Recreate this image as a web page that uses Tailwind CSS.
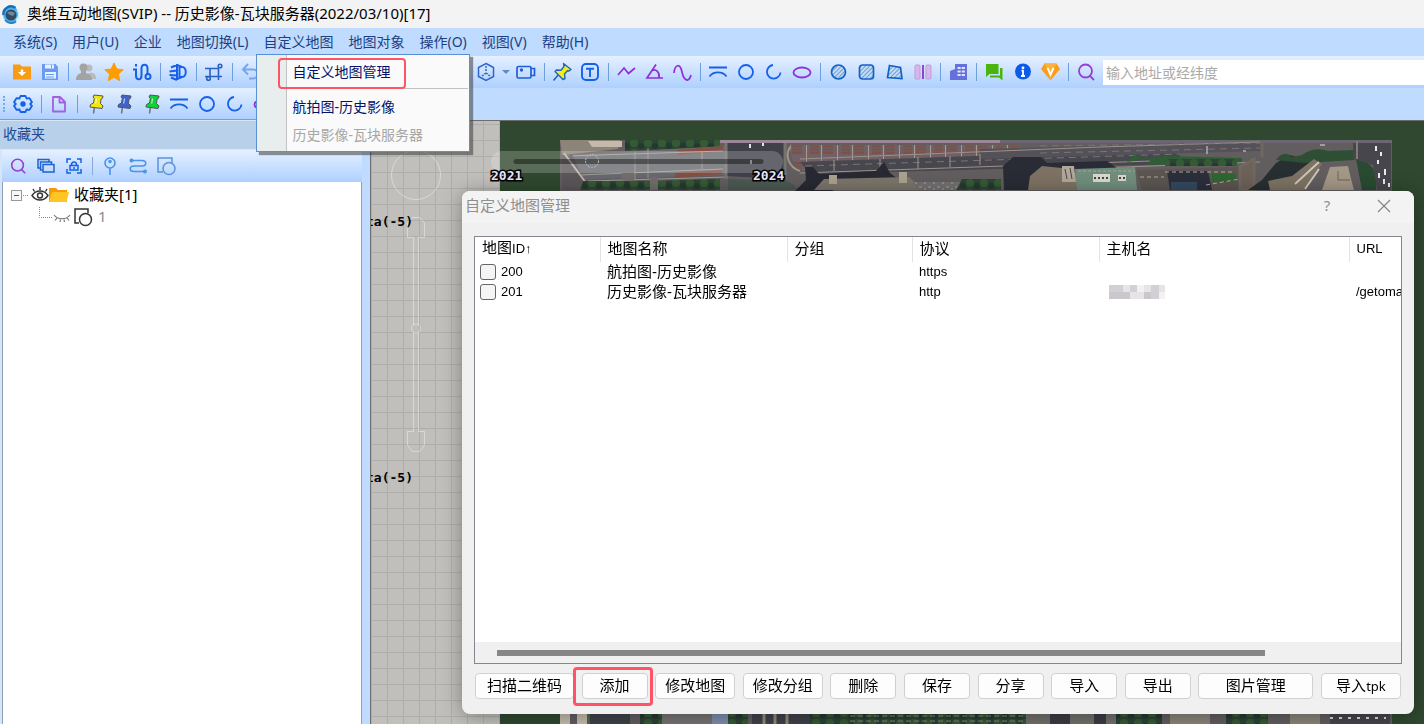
<!DOCTYPE html>
<html lang="zh-CN">
<head>
    <meta charset="UTF-8">
    <meta name="viewport" content="width=device-width, initial-scale=1.0">
    <title>奥维互动地图</title>
    <script src="https://cdn.jsdelivr.net/npm/@tailwindcss/browser@4"></script>
</head>
<body class="h-screen flex flex-col overflow-hidden bg-[#bfdbff] text-sm text-black font-['Noto_Sans','Noto_Sans_CJK_SC',sans-serif]">

    <!-- shared icons -->
    <svg class="absolute w-0 h-0">
        <symbol id="pin" viewBox="0 0 20 20">
            <path d="M7.500 13l-1 6.500" stroke="#777" stroke-width="1.600" fill="none"/>
            <path d="M7 1l9 1-.5 2.300-1.500.7-.5 4.500 2.500 2.500-1 2.500-12-1.500.5-2.500 3-1.500.8-4.500-1.300-1.500z" fill="currentColor" stroke="#555" stroke-width="1" stroke-linejoin="round"/>
            <path d="M9.500 4.500l-.8 5" stroke="#fff" stroke-opacity=".7" stroke-width="1.200"/>
        </symbol>
        <symbol id="arc" viewBox="0 0 20 20">
            <path d="M1 5.500h18M1.500 14.500c4-5.500 13-5.500 17 0" fill="none" stroke="#1560e8" stroke-width="1.800"/>
        </symbol>
        <symbol id="circle" viewBox="0 0 20 20">
            <circle cx="10" cy="10" r="7" fill="none" stroke="#1560e8" stroke-width="1.800"/>
        </symbol>
        <symbol id="open-circle" viewBox="0 0 20 20">
            <path d="M9 3a6.800 6.800 0 1 0 7.500 7.500" fill="none" stroke="#1560e8" stroke-width="1.800"/>
        </symbol>
        <symbol id="ellipse" viewBox="0 0 20 20">
            <ellipse cx="10" cy="10.500" rx="8.500" ry="5" fill="none" stroke="#8f2fd6" stroke-width="1.800"/>
        </symbol>
        <symbol id="search" viewBox="0 0 20 20">
            <circle cx="9.500" cy="9" r="6.500" fill="none" stroke="#9340d5" stroke-width="1.800"/>
            <path d="M14 14l4 4" stroke="#9340d5" stroke-width="1.800"/>
        </symbol>
        <pattern id="hatch" width="3" height="3" patternUnits="userSpaceOnUse" patternTransform="rotate(45)">
            <path d="M0 0h3v3H0z" fill="#c3dbf5"/>
            <path d="M.5 0v3" stroke="#6d9fd6" stroke-width="1"/>
        </pattern>
    </svg>

    <header class="h-7 shrink-0 flex items-center gap-[5px] pl-0.5 bg-[#f3f3f3] text-[15px]">
        <svg class="size-5" viewBox="0 0 20 20">
            <circle cx="9" cy="10.500" r="8" fill="#45b4ec"/>
            <path d="M1.500 11a7.500 7.500 0 0 1 12-7" fill="none" stroke="#176cb8" stroke-width="2.400"/>
            <path d="M3 16a8 8 0 0 0 11 1.500" fill="none" stroke="#2b82c9" stroke-width="2"/>
            <circle cx="9" cy="11" r="5.500" fill="#344a63"/>
            <path d="M5 9c3-3 6-1 8 0l-2 3-3-1z" fill="#71889c"/>
            <path d="M15 6c2 3 2 7-1 10" fill="none" stroke="#c9efff" stroke-width="1.200"/>
        </svg>
        <h1>奥维互动地图(SVIP) -- 历史影像-瓦块服务器(2022/03/10)[17]</h1>
    </header>

    <nav class="relative z-20 h-7 shrink-0 flex items-center gap-[15px] pl-[13px] text-[14px] leading-5 text-[#1c4183]">
        <button>系统(S)</button>
        <button>用户(U)</button>
        <button>企业</button>
        <button>地图切换(L)</button>
        <div class="relative">
            <button>自定义地图</button>
            <!-- open menu -->
            <div class="absolute top-[22px] -left-[7px] w-[214px] h-[98px] border border-[#5b8fd3] bg-[#fafafa] shadow-[3px_3px_1px_rgba(60,60,60,0.55)] text-[#00126b] flex">
                <div class="w-[30px] shrink-0 bg-[#e8eeee] border-r border-[#c2c2c2]"></div>
                <div class="grow flex flex-col">
                    <button class="relative h-[33px] pl-[5px] text-left">自定义地图管理
                        <span class="absolute -left-[9px] top-[3px] w-[128px] h-[31px] border-2 border-[#ff5468] rounded-sm"></span>
                    </button>
                    <div class="h-px mr-px bg-[#c2c2c2]"></div>
                    <button class="mt-1 h-7 pl-[5px] text-left">航拍图-历史影像</button>
                    <button class="h-7 pl-[5px] text-left text-[#a6a6a6]" disabled>历史影像-瓦块服务器</button>
                </div>
            </div>
        </div>
        <button>地图对象</button>
        <button>操作(O)</button>
        <button>视图(V)</button>
        <button>帮助(H)</button>
    </nav>

    <!-- main toolbar -->
    <div class="h-8 shrink-0 flex items-center pl-2 bg-linear-to-b from-[#e5f0ff] to-[#aed0ff]">
        <button class="w-7 grid place-items-center" aria-label="导入">
            <svg class="size-5" viewBox="0 0 20 20"><path d="M1 2.500h7l2 2h9v13H1z" fill="#fa9c11"/><path d="M10 7.500v3" stroke="#fff" stroke-width="2.400"/><path d="M6 10h8l-4 4z" fill="#fff"/></svg>
        </button>
        <button class="w-7 grid place-items-center" aria-label="保存">
            <svg class="size-5" viewBox="0 0 20 20"><path d="M2 2h13.500l2.500 3v13H2z" fill="#6b9bf0"/><path d="M5 2.500h9v4H5zM5 10h11v6.500H5z" fill="#e7f1ff"/><path d="M6 12.500h8M6 15h8M11.500 3v3" stroke="#6b9bf0"/></svg>
        </button>
        <span class="w-2 flex justify-center"><i class="w-px h-[18px] bg-[#6d9fde]"></i></span>
        <button class="w-7 grid place-items-center" aria-label="好友">
            <svg class="size-5" viewBox="0 0 20 20"><circle cx="13" cy="6" r="3.500" fill="#bbb"/><path d="M10 17c0-8 10-8 10-1v1z" fill="#bbb"/><circle cx="7.500" cy="5.500" r="4" fill="#a3a3a3"/><path d="M0 18c0-5 3-6 5-7V9h5v2c3 1 6 2 6 7z" fill="#a3a3a3"/></svg>
        </button>
        <button class="w-7 grid place-items-center" aria-label="收藏">
            <svg class="size-5" viewBox="0 0 20 20"><path d="M10 1l2.800 6 6.400.7-4.800 4.400 1.400 6.600L10 15.400l-5.800 3.300 1.400-6.600L.8 7.700 7.200 7z" fill="#ff9d00" stroke="#ff9d00" stroke-linejoin="round"/></svg>
        </button>
        <button class="w-7 grid place-items-center" aria-label="轨迹">
            <svg class="size-5" viewBox="0 0 20 20" fill="none" stroke="#1560e8" stroke-width="2"><path d="M1 7.500h3v6c0 5 5.500 5 5.500 0v-7c0-5 6-5 6 0v6"/><circle cx="16" cy="14.500" r="2.500"/><path d="M4 2v2.500"/></svg>
        </button>
        <span class="w-2 flex justify-center"><i class="w-px h-[18px] bg-[#6d9fde]"></i></span>
        <button class="w-7 grid place-items-center" aria-label="三维">
            <svg class="size-5" viewBox="0 0 20 20" fill="none" stroke="#1560e8" stroke-width="2"><path d="M3 5.500l6-2.500M1.500 9.500l7.500-1M1.500 13l7.500.5M9 18l-6-2.500M9 2v16"/><path d="M11.500 5H14c5 0 5 10 0 10h-2.500zM9 3l5 2M9 17l5-2"/></svg>
        </button>
        <span class="w-2 flex justify-center"><i class="w-px h-[18px] bg-[#6d9fde]"></i></span>
        <button class="w-7 grid place-items-center" aria-label="裁剪">
            <svg class="size-5" viewBox="0 0 20 20" fill="none" stroke="#2a61c4" stroke-width="1.600"><path d="M1 6.500h14M6 6.500v8M1 14.500h17M14.500 6.500V18"/><circle cx="16" cy="4" r="1.800"/><circle cx="4.500" cy="16.500" r="1.800"/></svg>
        </button>
        <span class="w-2 flex justify-center"><i class="w-px h-[18px] bg-[#6d9fde]"></i></span>
        <button class="w-7 grid place-items-center" aria-label="撤销">
            <svg class="size-5" viewBox="0 0 20 20" fill="none" stroke="#79a5ee" stroke-width="2"><path d="M8 2L3 7.500l5 5M3 7.500h10c6 0 6 9 0 9H9"/></svg>
        </button>
        <span class="w-52 shrink-0"></span>
        <button class="w-7 grid place-items-center" aria-label="立方体">
            <svg class="size-5" viewBox="0 0 20 20" fill="none" stroke="#2c66c9" stroke-width="1.500"><path d="M10 1.500l7.500 4v9l-7.500 4-7.500-4v-9z"/><path d="M10 4v6M10 11l-4 3M10 11l4 3" stroke-dasharray="2 1"/></svg>
        </button>
        <button class="w-3 grid place-items-center" aria-label="更多">
            <svg class="w-2 h-1" viewBox="0 0 8 4"><path d="M0 0h8L4 4z" fill="#5e8ac7"/></svg>
        </button>
        <button class="w-7 grid place-items-center" aria-label="摄像">
            <svg class="size-5" viewBox="0 0 20 20" fill="none" stroke="#1f5fd6" stroke-width="1.700"><rect x="1" y="4.500" width="14" height="11.500" rx="1.500"/><path d="M15 6.500h3.500v7H15"/><circle cx="5.500" cy="8" r=".8" fill="#1f5fd6"/></svg>
        </button>
        <span class="w-2 flex justify-center"><i class="w-px h-[18px] bg-[#6d9fde]"></i></span>
        <button class="w-7 grid place-items-center" aria-label="标签">
            <svg class="size-5" viewBox="0 0 20 20"><path d="M7 12l-5.500 6.500" stroke="#2464b8" stroke-width="1.600"/><path d="M11.500 1.500l7.500 6-2 1.500-1.500-.3-3 3.300.5 4.500-2 1L3 9.500 4.500 8l4.500.2L12 4.500z" fill="#f7ee10" stroke="#2464b8" stroke-width="1.400" stroke-linejoin="round"/></svg>
        </button>
        <button class="w-7 grid place-items-center" aria-label="文字">
            <svg class="size-5" viewBox="0 0 20 20" fill="none" stroke="#1560e8" stroke-width="1.900"><rect x="2" y="2" width="16" height="16" rx="4"/><path d="M6 6.800h8M10 6.800V15"/></svg>
        </button>
        <span class="w-2 flex justify-center"><i class="w-px h-[18px] bg-[#6d9fde]"></i></span>
        <button class="w-7 grid place-items-center" aria-label="折线">
            <svg class="size-5" viewBox="0 0 20 20" fill="none" stroke="#8f2fd6" stroke-width="1.700"><path d="M2 13l6-7 4.500 5.500L19 6"/></svg>
        </button>
        <button class="w-7 grid place-items-center" aria-label="角度">
            <svg class="size-5" viewBox="0 0 20 20" fill="none" stroke="#8f2fd6" stroke-width="1.700"><path d="M12 2.500L3 16h16M8 8.500c4-2 8 2 7 7"/></svg>
        </button>
        <button class="w-7 grid place-items-center" aria-label="曲线">
            <svg class="size-5" viewBox="0 0 20 20" fill="none" stroke="#8f2fd6" stroke-width="1.700"><path d="M2 11c1-9 6-10 8-1s7 11 9 3"/></svg>
        </button>
        <span class="w-2 flex justify-center"><i class="w-px h-[18px] bg-[#6d9fde]"></i></span>
        <button class="w-7 grid place-items-center" aria-label="弧"><svg class="size-5"><use href="#arc"/></svg></button>
        <button class="w-7 grid place-items-center" aria-label="圆"><svg class="size-5"><use href="#circle"/></svg></button>
        <button class="w-7 grid place-items-center" aria-label="圆弧"><svg class="size-5"><use href="#open-circle"/></svg></button>
        <button class="w-7 grid place-items-center" aria-label="椭圆"><svg class="size-5"><use href="#ellipse"/></svg></button>
        <span class="w-2 flex justify-center"><i class="w-px h-[18px] bg-[#6d9fde]"></i></span>
        <button class="w-7 grid place-items-center" aria-label="填充圆">
            <svg class="size-5" viewBox="0 0 20 20"><circle cx="10.500" cy="10" r="7" fill="url(#hatch)" stroke="#1560c8" stroke-width="1.700"/></svg>
        </button>
        <button class="w-7 grid place-items-center" aria-label="填充矩形">
            <svg class="size-5" viewBox="0 0 20 20"><rect x="3.500" y="3" width="14" height="14" rx="3" fill="url(#hatch)" stroke="#1560c8" stroke-width="1.700"/></svg>
        </button>
        <button class="w-7 grid place-items-center" aria-label="多边形">
            <svg class="size-5" viewBox="0 0 20 20"><path d="M5.500 3.500l11 2 1.500 11L3.500 15.500z" fill="url(#hatch)" stroke="#1560c8" stroke-width="1.700"/></svg>
        </button>
        <button class="w-7 grid place-items-center" aria-label="缓冲区">
            <svg class="size-5" viewBox="0 0 20 20"><rect x="3" y="3" width="5" height="14" rx="1" fill="#dcb2f3" stroke="#b7a3c9"/><rect x="14" y="3" width="5" height="14" rx="1" fill="#dcb2f3" stroke="#b7a3c9"/><path d="M11 3v14" stroke="#8a35c9" stroke-width="1.800"/></svg>
        </button>
        <span class="w-2 flex justify-center"><i class="w-px h-[18px] bg-[#6d9fde]"></i></span>
        <button class="w-7 grid place-items-center" aria-label="企业">
            <svg class="size-5" viewBox="0 0 20 20"><path d="M2 9l5-2v11H2zM7 2h12v16H7z" fill="#6670dc"/><path d="M9.500 6h8M9.500 9.500h8M9.500 13h8" stroke="#dce6ff" stroke-width="2" stroke-dasharray="3.200 1"/></svg>
        </button>
        <span class="w-2 flex justify-center"><i class="w-px h-[18px] bg-[#6d9fde]"></i></span>
        <button class="w-7 grid place-items-center" aria-label="消息">
            <svg class="size-5" viewBox="0 0 20 20" fill="#48b40c"><path d="M2 2h12.500v10H5.500L2 15z"/><path d="M16 6h2.500v12.500L15 15.500H6v-2h10z"/></svg>
        </button>
        <button class="w-7 grid place-items-center" aria-label="信息">
            <svg class="size-5" viewBox="0 0 20 20"><circle cx="11" cy="9.500" r="8" fill="#0c5be6"/><circle cx="11" cy="5.800" r="1.400" fill="#fff"/><path d="M9.500 8.700h1.500v5M9 14h4" fill="none" stroke="#fff" stroke-width="1.800"/></svg>
        </button>
        <button class="w-7 grid place-items-center" aria-label="会员">
            <svg class="size-5" viewBox="0 0 20 20"><path d="M4.500 1.500h12L20 7l-9.500 11.500L1 7z" fill="#fb9d18"/><path d="M4.500 1.500L7 7l3.500 11.500L14 7l2.500-5.500z" fill="#f7b33d"/><path d="M7.500 6l3 6.500 3-6.500" fill="none" stroke="#fff" stroke-width="1.800"/></svg>
        </button>
        <span class="w-2 flex justify-center"><i class="w-px h-[18px] bg-[#6d9fde]"></i></span>
        <label for="addr" class="w-7 grid place-items-center" aria-label="搜索"><svg class="size-5"><use href="#search"/></svg></label>
        <input id="addr" type="text" placeholder="输入地址或经纬度" class="grow min-w-0 h-[25px] ml-[3px] pl-[3px] bg-white text-[14px] placeholder:text-[#a9a9a9] outline-none">
    </div>

    <!-- second toolbar -->
    <div class="h-8 w-[400px] shrink-0 flex items-center pl-[3px] border-b border-[#6f9fdc] bg-linear-to-b from-[#e5f0ff] to-[#aed0ff]">
        <span class="w-1.5 h-4 border-l-2 border-dotted border-[#7ba7e2]"></span>
        <button class="w-7 grid place-items-center" aria-label="设置">
            <svg class="size-5" viewBox="0 0 20 20" fill="none" stroke="#1560e8" stroke-width="1.800"><path d="M7.500 2h5l1 2.500 3-.3 2.500 4L17.200 10l1.800 1.800-2.500 4-3-.3-1 2.500h-5l-1-2.500-3 .3-2.500-4L2.800 10 1 8.200l2.500-4 3 .3z" stroke-linejoin="round"/><circle cx="10" cy="10" r="1.800" fill="#1560e8"/></svg>
        </button>
        <span class="w-2 flex justify-center"><i class="w-px h-[18px] bg-[#6d9fde]"></i></span>
        <button class="w-7 grid place-items-center" aria-label="新建">
            <svg class="size-5" viewBox="0 0 20 20" fill="none" stroke="#a25fe0" stroke-width="1.800" stroke-linejoin="round"><path d="M4 3h7l5 5v9.500H4zM10.500 3.500V8.500h5"/></svg>
        </button>
        <span class="w-2 flex justify-center"><i class="w-px h-[18px] bg-[#6d9fde]"></i></span>
        <button class="w-7 pl-1 grid place-items-center text-[#f2e711]" aria-label="黄色图钉"><svg class="size-5"><use href="#pin"/></svg></button>
        <button class="w-7 pl-1 grid place-items-center text-[#3f62cf]" aria-label="蓝色图钉"><svg class="size-5"><use href="#pin"/></svg></button>
        <button class="w-7 pl-1 grid place-items-center text-[#0ed336]" aria-label="绿色图钉"><svg class="size-5"><use href="#pin"/></svg></button>
        <button class="w-7 grid place-items-center" aria-label="弧"><svg class="size-5"><use href="#arc"/></svg></button>
        <button class="w-7 grid place-items-center" aria-label="圆"><svg class="size-5"><use href="#circle"/></svg></button>
        <button class="w-7 grid place-items-center" aria-label="圆弧"><svg class="size-5"><use href="#open-circle"/></svg></button>
        <button class="w-7 grid place-items-center" aria-label="椭圆"><svg class="size-5"><use href="#ellipse"/></svg></button>
    </div>

    <div class="grow min-h-0 flex">
        <!-- favourites panel -->
        <aside class="w-[362px] mr-2 shrink-0 flex flex-col pl-0.5 bg-[#d6e6f7]">
            <h2 class="h-[30px] -ml-0.5 pl-[3px] pb-0.5 flex items-center bg-[#b9d0eb] border-y border-[#d6e6f7] text-[14px] text-[#1c4a93]">收藏夹</h2>
            <div class="h-8 shrink-0 flex items-center pl-0.5 bg-linear-to-b from-[#e5f0ff] to-[#aed0ff]">
                <button class="w-7 grid place-items-center" aria-label="搜索"><svg class="size-[18px]"><use href="#search"/></svg></button>
                <button class="w-7 grid place-items-center" aria-label="图层">
                    <svg class="size-5" viewBox="0 0 20 20" fill="none" stroke="#1f62d0" stroke-width="1.500"><path d="M4.500 12H2V3.500h11V6"/><rect x="7" y="8.500" width="11" height="7.500"/><path d="M6.500 14H4.500V6h11v2"/></svg>
                </button>
                <button class="w-7 grid place-items-center" aria-label="锁定">
                    <svg class="size-5" viewBox="0 0 20 20" fill="none" stroke="#1560e8" stroke-width="1.500"><path d="M3 7V3h4M13 3h4v4M17 13v4h-4M7 17H3v-4"/><rect x="6" y="9.500" width="8" height="4.500"/><path d="M7.500 9c0-4 5-4 5 0M10 11v2"/></svg>
                </button>
                <span class="w-2 flex justify-center"><i class="w-px h-[18px] bg-[#8ba9d4]"></i></span>
                <button class="w-7 grid place-items-center" aria-label="定位">
                    <svg class="size-5" viewBox="0 0 20 20" fill="none" stroke="#4993e8" stroke-width="1.600"><circle cx="10" cy="7" r="5"/><circle cx="10" cy="5.500" r="1"/><path d="M10 12v7"/></svg>
                </button>
                <button class="w-7 grid place-items-center" aria-label="路线">
                    <svg class="size-5" viewBox="0 0 20 20" fill="none" stroke="#4993e8" stroke-width="1.600"><path d="M3 4.500h11c5 0 5 5.500 0 5.500H6c-5 0-5 5.500 0 5.500h11"/><circle cx="3.500" cy="4.500" r="1.200"/><circle cx="17" cy="15.500" r="1.200"/></svg>
                </button>
                <button class="w-7 grid place-items-center" aria-label="形状">
                    <svg class="size-5" viewBox="0 0 20 20" fill="none" stroke="#5b93d8" stroke-width="1.500"><path d="M7 16H2V2h14v5"/><circle cx="13" cy="12.500" r="6"/></svg>
                </button>
            </div>
            <ul class="grow bg-white border-l border-r border-[#8ca0b8] text-[15px] pl-2 pt-px">
                <li>
                    <div class="h-6 flex items-center">
                        <svg class="w-5 h-6" viewBox="0 0 20 24"><rect x=".5" y="7.500" width="10" height="10" fill="#f7f7f7" stroke="#999"/><path d="M3 12.500h5" stroke="#3a5cab"/><path d="M12 12.500h6" stroke="#888" stroke-dasharray="1 1"/></svg>
                        <svg class="w-[18px] h-5" viewBox="0 0 18 20" fill="none" stroke="#333" stroke-width="1.400"><path d="M1 10.500c4-6 12-6 16 0-4 6-12 6-16 0zM3.500 6.500L2 4M9 5V2M14.500 6.500L16 4"/><circle cx="9" cy="10.500" r="2.500"/></svg>
                        <svg class="w-5 h-4" viewBox="0 0 20 16"><path d="M0 1h7l2 2h9v12H0z" fill="#f59a0b"/><path d="M3 5h17l-2.500 10H0z" fill="#ffc425"/></svg>
                        <span class="pl-[5px]">收藏夹[1]</span>
                    </div>
                    <ul>
                        <li class="h-5 flex items-center pl-7 text-[#8a8a8a]">
                            <svg class="w-[14px] h-5" viewBox="0 0 14 20" fill="none" stroke="#888" stroke-dasharray="1 1"><path d="M.5 0v10.500H14"/></svg>
                            <svg class="w-[18px] h-4" viewBox="0 0 18 16" fill="none" stroke="#777" stroke-width="1.200"><path d="M1 6c4 5 12 5 16 0M4 9l-2 2.500M7.500 10.500L7 13M11 10.500l.5 2.500M14 9l2 2.500"/></svg>
                            <svg class="ml-0.5 w-5 h-5" viewBox="0 0 20 20" fill="none" stroke="#333" stroke-width="1.500"><path d="M6 16H2V2h13v4"/><circle cx="12.500" cy="12.500" r="6"/></svg>
                            <span class="pl-[5px]">1</span>
                        </li>
                    </ul>
                </li>
            </ul>
        </aside>

        <!-- map canvas -->
        <main class="grow min-w-0 relative overflow-hidden border-l border-t border-[#6e6e6e] bg-[#c0bfbb]">
            <svg class="absolute inset-0 w-full h-full">
                <defs>
                    <pattern id="grid" x="387" y="141" width="16" height="16" patternUnits="userSpaceOnUse"><path d="M.5 0v16M0 .5h16" stroke="#aeaeaa"/></pattern>
                    <pattern id="cars" width="9" height="6" patternUnits="userSpaceOnUse"><path d="M1 2h3M6 4h2" stroke="#a9a6a8" stroke-width="1"/></pattern>
                    <pattern id="roofs" width="31" height="20" patternUnits="userSpaceOnUse"><path d="M0 0h31v20H0z" fill="#716066"/><path d="M4 3h9v12H4zM17 3h10v12H17z" fill="#7f5046"/><path d="M4 6h9M4 9h9M4 12h9M17 6h10M17 9h10M17 12h10" stroke="#65646d"/><path d="M.5 0v20M15.500 0v20" stroke="#a59b93"/></pattern>
                    <pattern id="trees" width="14" height="10" patternUnits="userSpaceOnUse"><path d="M0 0h14v10H0z" fill="#2c4434"/><circle cx="4" cy="4" r="4" fill="#355b34"/><circle cx="11" cy="7" r="3" fill="#24392d"/></pattern>
                    <clipPath id="photo"><rect x="560" y="141" width="832" height="700"/></clipPath>
                </defs>
                <g transform="translate(-371 -122)">
                    <rect x="371" y="122" width="129" height="1200" fill="url(#grid)"/>
                    <rect x="500" y="122" width="2000" height="1200" fill="#30482f"/>
                    <!-- aerial photo -->
                    <g clip-path="url(#photo)">
                        <rect x="560" y="141" width="832" height="700" fill="#625e60"/>
                        <path d="M560 141h60l-2 9-56 6z" fill="#8c8478"/>
                        <path d="M588 142h34v6h-30z" fill="#c4b9ab"/>
                        <path d="M625 141h95v7l-95 4z" fill="url(#trees)"/>
                        <path d="M720 141h280v3H720z" fill="#9b8797"/>
                        <path d="M1000 141h392v3h-392z" fill="#6e6572"/>
                        <path d="M570 156l155-9v29l-150 5z" fill="#68696e"/>
                        <path d="M678 151l45-4v5l-45 4zM675 174l47-3v4l-47 4z" fill="#854f43"/>
                        <path d="M568 157l155-5M580 176l143-6M588 182l140-4" stroke="#a29c96" fill="none"/>
                        <path d="M635 153v28M648 149v30M702 152v18" stroke="#96908b"/>
                        <path d="M562 160l10-5 16 36h-26z" fill="#5b5659"/>
                        <path d="M564 154l22 30" stroke="#bfb3a6" stroke-width="2"/>
                        <path d="M583 182h67l70-2v11H580z" fill="url(#trees)"/>
                        <path d="M622 172h12v9h-12zM650 178h8v13h-8z" fill="#736d6d"/>
                        <path d="M726 144h58v36l-58-3z" fill="#3f4049"/>
                        <path d="M750 145v4M763 144v3M751 161v4" stroke="#e5e5e5" stroke-width="2"/>
                        <path d="M726 144v36M785 144v36" stroke="#77736f" stroke-width="3"/>
                        <path d="M728 180l60 2 12 9h-72z" fill="#4b5953"/>
                        <path d="M790 146h230v11l-210 5-2 10-10-2-6-9z" fill="url(#roofs)"/>
                        <path d="M800 163l380-13v15l-370 10z" fill="#48474e"/>
                        <path d="M980 150l280-7 1 9-281 8z" fill="#545158"/>
                        <path d="M800 160l300-12 160-5M800 174l380-13M1070 170l190-7" stroke="#9b9289" fill="none"/>
                        <path d="M805 167l375-12M1040 147l220-3M1040 154l220-5" stroke="#77747a" stroke-dasharray="7 5" fill="none"/>
                        <path d="M790 148c-5 8-2 20 10 24" fill="none" stroke="#a19884" stroke-width="2"/>
                        <path d="M834 161v11M880 160v12M918 158v12M950 157v11M980 155v11" stroke="#9e958c"/>
                        <path d="M805 168h8l6 7 57-3 8-9 6 11 8 6-60 8-7 5h-37l12-12z" fill="#282932"/>
                        <path d="M824 180l85-2 15 13h-110z" fill="#7b756a"/>
                        <path d="M829 176h8v9h-8zM899 173h8v11h-8z" fill="#aaa18f"/>
                        <path d="M912 183h55v8h-47z" fill="#727170"/>
                        <path d="M912 183h55v8h-47z" fill="url(#cars)"/>
                        <path d="M962 180h39v11h-45z" fill="url(#trees)"/>
                        <path d="M1003 167l10-9 28 0 6 6 60-2 14 10-90 6-2 13h-25z" fill="#2a2c35"/>
                        <path d="M1030 177l12-10 20 2 16 6v16h-50z" fill="#7d7263"/>
                        <path d="M1062 167l12 0 2 16h-14z" fill="#b1a79a"/>
                        <path d="M1065 170l2 10M1070 169l2 11" stroke="#4a4640" stroke-width="1"/>
                        <path d="M1075 170l60-2 2 23h-60z" fill="#708e7d"/>
                        <path d="M1093 175h17v8h-17zM1118 176h8v6h-8z" fill="#dad8cd"/>
                        <path d="M1094 179h15M1119 179h6" stroke="#444" stroke-width="2" stroke-dasharray="2 2"/>
                        <path d="M1078 172h57" stroke="#ae9d90" stroke-dasharray="3 2"/>
                        <path d="M1127 163q6-12 15-3q8-7 8 6l92-3v-4l-80-2z" fill="#2e5d36"/>
                        <path d="M1165 160h72v7h-72z" fill="url(#trees)"/>
                        <path d="M1136 171l105-3 6 23h-105z" fill="#5c5552"/>
                        <path d="M1167 172l41 0 4 19h-42z" fill="#2b2f3c"/>
                        <path d="M1171 183h26v8h-26z" fill="#34495f"/>
                        <path d="M1212 174h24v9h-24z" fill="#2e6732"/>
                        <path d="M1140 178h24M1206 186l34-6M1165 173h70" stroke="#b3a899" stroke-dasharray="4 3"/>
                        <path d="M1262 141v17M1240 168l14-8v31h-14z" stroke="#6f6861" fill="#6d6158" stroke-width="3"/>
                        <path d="M1262 181l14-17 14-8 12 4 12 2-40 29h-26z" fill="#282f32"/>
                        <path d="M1276 161q8-11 16-3l10-2q12-9 26-4l26-1v10l-50 3z" fill="#2e4f33"/>
                        <path d="M1268 182l24-5 22-17 8 5-18 26h-34z" fill="#7d7364"/>
                        <path d="M1295 185l24-22M1305 190l14-20" stroke="#cdc5b7" stroke-width="2"/>
                        <path d="M1330 168l18-1 3 13 3 11h-32z" fill="#a39886"/>
                        <path d="M1338 172v9h12" stroke="#6c6455" fill="none"/>
                        <path d="M1356 160q14 1 20 15v16h-14z" fill="#294b31"/>
                        <path d="M1353 144h38v47h-14l-4-25-20-6z" fill="#47464d"/>
                        <path d="M1357 142v18" stroke="#837b75" stroke-width="2"/>
                        <path d="M1376 147v5M1381 153v4M1378 161v4M1385 170v6M1379 174v5M1384 180v5M1389 184v4" stroke="#e9e9e9" stroke-width="2"/>
                        <path d="M1207 147v8M1320 146h5M1243 152h3" stroke="#ddd"/>
                        <!-- lower edge -->
                        <path d="M560 712h10v20h-10zM577 712h10v20h-10z" fill="#c4bdaf"/>
                        <path d="M590 712h40v20h-40z" fill="#374641"/>
                        <path d="M592 712h36v20h-36zM752 712h78v20h-78z" fill="#40424b"/>
                        <path d="M640 712h22v20h-22zM720 712h28v20h-28z" fill="url(#trees)"/>
                        <path d="M662 712h50v20h-50z" fill="#777473"/>
                        <path d="M712 714h16v12h-16z" fill="#7e8daf"/>
                        <path d="M764 712v20M775 712v20M787 712v20" stroke="#938a7b" stroke-width="3"/>
                        <path d="M810 712h36v20h-36zM846 712h180v20H846z" fill="url(#trees)"/>
                        <path d="M850 717h176M850 722h176" stroke="#8a8878" stroke-dasharray="5 3"/>
                        <path d="M1026 712h90v20h-90z" fill="#72706d"/>
                        <path d="M1050 712h20v20h-20zM1094 712h12v20h-12z" fill="#3c3d44"/>
                        <path d="M1116 712h46v20h-46zM1226 712h42v20h-42z" fill="url(#trees)"/>
                        <path d="M1170 712h40v20h-40zM1290 712h30v20h-30z" fill="#8b857a"/>
                        <path d="M1330 712h60v20h-60z" fill="#45454d"/>
                        <path d="M1330 719h56" stroke="#ddd" stroke-dasharray="3 6" stroke-width="2"/>
                    </g>
                    <!-- time slider -->
                    <rect x="491" y="152" width="292" height="22" rx="11" fill="#fff" fill-opacity=".2"/>
                    <path d="M516 162.500h245" stroke="#000" stroke-opacity=".4" stroke-width="5" stroke-linecap="round"/>
                    <circle cx="592" cy="162" r="6.500" fill="none" stroke="#bbb" stroke-dasharray="2 1"/>
                    <!-- compass and zoom -->
                    <g fill="none" stroke="#fff" stroke-opacity=".4">
                        <circle cx="416" cy="176" r="24.500"/>
                        <path d="M413.500 326V238.500h-6V224l5-5.500h7l5 5.500v14.500h-6V326M413.500 333v99.500h-6V446l5 6.500h7l5-6.500v-13.500h-6V333"/>
                        <circle cx="416" cy="329.500" r="4.500"/>
                    </g>
                    <g class="font-['DejaVu_Sans_Mono',monospace] font-bold text-[13px]">
                        <text x="491" y="181" fill="#e6e6ff" stroke="#000" stroke-width="3" paint-order="stroke">2021</text>
                        <text x="753" y="181" fill="#e6e6ff" stroke="#000" stroke-width="3" paint-order="stroke">2024</text>
                        <text x="413" y="227" text-anchor="end">ta(-5)</text>
                        <text x="413" y="483" text-anchor="end">ta(-5)</text>
                    </g>
                </g>
            </svg>
        </main>
    </div>

    <!-- custom map manager window -->
    <section role="dialog" aria-labelledby="dlg-title" class="fixed z-10 left-[462px] right-[10px] top-[191px] bottom-[10px] flex flex-col rounded-lg bg-[#f0f0f0] shadow-[0_2px_20px_rgba(0,0,0,0.35)] overflow-hidden">
        <div class="h-8 shrink-0 flex items-center pl-[3px] pr-5 pb-0.5 bg-[#f3f3f3] text-[#8f8f8f]">
            <h2 id="dlg-title" class="grow text-[15px]">自定义地图管理</h2>
            <button class="w-5 mr-[37px] text-[15px]" aria-label="帮助">?</button>
            <button class="w-5 grid place-items-center" aria-label="关闭">
                <svg class="size-3.5" viewBox="0 0 14 14"><path d="M1 1l12 12M13 1L1 13" stroke="#868686" stroke-width="1.200"/></svg>
            </button>
        </div>
        <div class="grow min-h-0 mt-[13px] mx-3 mb-[9px] border border-[#828790] bg-white flex flex-col overflow-hidden">
            <table class="w-full table-fixed text-left text-[13px] whitespace-nowrap font-['Liberation_Sans','Noto_Sans_CJK_SC',sans-serif]">
                <colgroup>
                    <col class="w-[125px]"><col class="w-[187px]"><col class="w-[125px]"><col class="w-[187px]"><col class="w-[250px]"><col>
                </colgroup>
                <thead>
                    <tr class="h-[25px] text-[15px] *:font-normal *:p-0 *:pl-[7px] *:pb-0.5 *:leading-[22px] *:border-r *:border-[#e3e3e3] *:last:border-r-0">
                        <th>地图<span class="text-[13px]">ID↑</span></th>
                        <th>地图名称</th>
                        <th>分组</th>
                        <th>协议</th>
                        <th>主机名</th>
                        <th><span class="text-[13px]">URL</span></th>
                    </tr>
                </thead>
                <tbody class="*:h-5 *:*:p-0 *:*:pl-[7px] *:*:leading-5 *:*:overflow-hidden">
                    <tr>
                        <td>
                            <label class="-ml-0.5 flex items-center gap-[5px]"><input type="checkbox" class="appearance-none size-4 border border-[#666] rounded-[3px] bg-[#f5f5f5]">200</label>
                        </td>
                        <td class="text-[15px]">航拍图-历史影像</td>
                        <td></td>
                        <td>https</td>
                        <td></td>
                        <td></td>
                    </tr>
                    <tr>
                        <td>
                            <label class="-ml-0.5 flex items-center gap-[5px]"><input type="checkbox" class="appearance-none size-4 border border-[#666] rounded-[3px] bg-[#f5f5f5]">201</label>
                        </td>
                        <td class="text-[15px]">历史影像-瓦块服务器</td>
                        <td></td>
                        <td>http</td>
                        <td>
                            <!-- masked host -->
                            <svg class="ml-[3px] w-14 h-3.5" viewBox="0 0 56 14"><path d="M0 0h56v14H0z" fill="#e6e4e7"/><path d="M0 0h14v7H0zM21 0h7v7h-7zM42 0h8v14h-8z" fill="#d2cfd5"/><path d="M0 7h21v7H0zM35 7h7v7h-7z" fill="#cac8cd"/><path d="M28 0h7v7h-7zM50 7h6v7h-6z" fill="#f3f1f1"/></svg>
                        </td>
                        <td>/getomap</td>
                    </tr>
                </tbody>
            </table>
            <div class="mt-auto h-[21px] shrink-0 pl-[22px] bg-[#f0f0f0] flex items-center">
                <div class="w-[85%] h-1.5 bg-[#868686]"></div>
            </div>
        </div>
        <div class="shrink-0 mb-[15px] px-[13px] flex justify-between text-[15px] *:h-[26px] *:pb-0.5 *:bg-[#fdfdfd] *:border *:border-[#d0d0d0] *:rounded *:leading-5 *:whitespace-nowrap">
            <button class="w-[99px]">扫描二维码</button>
            <button class="w-[66px] relative">添加
                <span class="absolute -left-2.5 -right-1.5 -top-[7px] -bottom-2 border-3 border-[#ff5468] rounded-sm"></span>
            </button>
            <button class="w-20">修改地图</button>
            <button class="w-20">修改分组</button>
            <button class="w-[66px]">删除</button>
            <button class="w-[66px]">保存</button>
            <button class="w-[66px]">分享</button>
            <button class="w-[66px]">导入</button>
            <button class="w-[66px]">导出</button>
            <button class="w-[115px]">图片管理</button>
            <button class="w-20">导入<span class="text-[13px]">tpk</span></button>
        </div>
    </section>

</body>
</html>
